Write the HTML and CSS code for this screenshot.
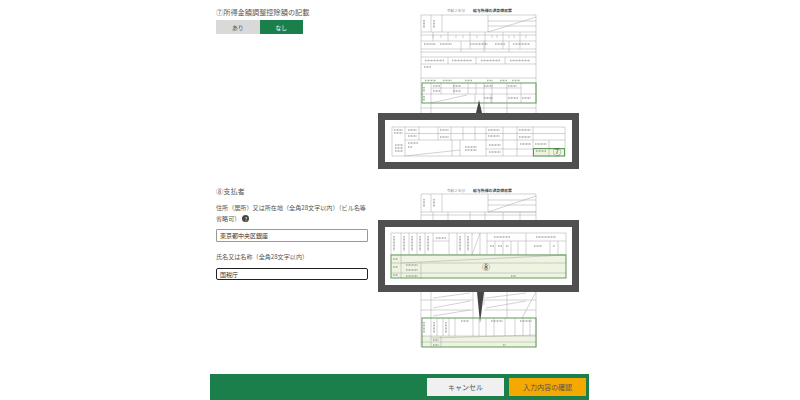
FILE: index.html
```html
<!DOCTYPE html>
<html lang="ja">
<head>
  <meta charset="UTF-8"/>
  <title>給与所得の源泉徴収票</title>
  <link rel="stylesheet" href="styles.css">
</head>
<body>
  <div class="page">

    <!-- 7: adjustment deduction -->
    <section class="section section-first">
      <div class="fields">
        <h2 class="heading">⑦所得金額調整控除額の記載</h2>
        <div class="toggle">
          <button class="toggle-btn">あり</button>
          <button class="toggle-btn active">なし</button>
        </div>
      </div>
      <svg class="figure" width="201" height="175" viewBox="378 0 201 175">
        <text class="doc-title" x="447" y="12">令和 2 年分</text>
        <text class="doc-name" x="473" y="12">給与所得の源泉徴収票</text>
        <path class="line" d="M421 15H536V113M421 15V113M431 15V32M442 15V32M488 15V32M488 21H536M488 26H536M488 32L536 17M421 32H536M421 35H536M421 41H536M421 49H536M421 52H536M421 57H536M421 64H536M421 78H536M433 32V41M448 32V41M470 32V49M485 32V49M503 32V49M520 32V49M461 41V52M484 41V52M509 41V52M448 57V64M476 57V64M505 57V64M433 35V38M441 35V38M456 35V38M463 35V38M477 35V38M492 35V38M497 35V38M509 35V38M514 35V38M526 35V38"/>
        <path class="text-mark" d="M424 20V28M434 20V28M424 44H436M440 44H452M470 44H488M495 44H505M513 44H530M425 60.500H444M452 60.500H472M481 60.500H500M510 60.500H530M424 67H431M425 80.500H436M443 80.500H452M465 80.500H472M487 80.500H493M500 80.500H507M512 80.500H520"/>
        <path class="line" d="M431 83V103M441 83V94M454 83V94M468 83V94M476 83V94M484 83V103M492 83V103M507 83V103M521 83V103M431 88H521M421 94H536M431 103L467 95M475 94V103M491 94V103"/>
        <path class="text-mark" d="M433 86H440M433 91H440M453 86H461M453 91H461M484 86H493M508 86H517M484 98H493M508 98H518M522 98H531M424 87V92M424 96V101"/>
        <rect class="hit" x="422" y="83" width="114" height="20"/>
        <path class="line" d="M421 108H536M431 103V113M484 103V113M507 103V113"/>
        <path class="dark" d="M479 100L476 113H482Z"/>

        <rect class="zoom-box" x="381.500" y="116.500" width="194" height="49"/>
        <rect class="hit-light" x="533.500" y="148.500" width="31" height="7"/>
        <path class="line" d="M392 127H565V156H392ZM405 127V156M419 127V140M405 133.500H565M405 140H565M438 127V140M451 127V140M463 127V140M475 127V140M486 127V156M503 127V156M517 127V156M533 127V156M549 140V156M460 140V156M486 149H565M405 156L460 150M452 140V156"/>
        <path class="text-mark" d="M394 130H403M394 133H403M408 130H417M408 136H417M440 130H449M440 137H449M488 130H500M488 136H500M519 130H531M519 137H531M395 145H403M395 148H403M395 151H403M408 143H418M408 147H412M465 147H477M465 150H477M489 145H501M489 152H501M520 144H531M535 144H547M536 151H546"/>
        <rect class="hit" x="533.500" y="148.500" width="31" height="7.500"/>
        <text class="mark" x="557" y="155">⑦</text>
      </svg>
    </section>

    <!-- 8: payer -->
    <section class="section section-second">
      <div class="fields">
        <h2 class="heading">⑧支払者</h2>
        <label class="label label-address">住所（居所）又は所在地（全角28文字以内）（ビル名等省略可）<span class="help">?</span></label>
        <input class="input" type="text" value="東京都中央区銀座"/>
        <label class="label label-name">氏名又は名称（全角28文字以内）</label>
        <input class="input input-focus" type="text" value="国税庁"/>
      </div>
      <svg class="figure" width="201" height="199" viewBox="378 175 201 199">
        <text class="doc-title" x="447" y="192">令和 2 年分</text>
        <text class="doc-name" x="473" y="192">給与所得の源泉徴収票</text>
        <path class="line" d="M421 194H536V220M421 194V220M431 194V212M442 194V212M488 194V212M488 200H536M488 205H536M488 212H536M488 212L536 196M421 212H536M421 215H536M433 212V220M448 212V220M470 212V220M485 212V220M503 212V220M520 212V220"/>
        <path class="text-mark" d="M424 199V207M434 199V207"/>

        <rect class="zoom-box" x="381.500" y="223.500" width="194" height="65"/>
        <path class="line" d="M391 233H566V255H391ZM401 233V255M409 233V255M417 233V255M425 233V255M433 233V255M449 233V255M457 233V255M465 233V255M472 233V255M480 233V255M487 241H566M487 233V255M495 241V255M503 241V255M511 241V255M518 241V255M526 233V255M550 241V255M558 241V255M433 241H449M472 255L480 233"/>
        <path class="text-mark" d="M394 236V251M404 236V251M412 236V251M420 236V251M428 236V251M460 236V251M468 236V251M436 238H446M494 237H510M536 237H556M490 246H494M498 246H502M506 246H509M534 246H542M553 246H555"/>
        <rect class="hit-light" x="391" y="255" width="175" height="23"/>
        <path class="line" d="M401 255V278M421 263V278M401 263L566 255M391 263H566M391 273H566"/>
        <path class="text-mark" d="M393 259H398M393 267H398M393 275H398M406 265H418M406 270H418M406 276H418M511 276H516"/>
        <rect class="hit" x="391" y="255" width="175" height="23"/>
        <text class="mark" x="486" y="270">⑧</text>

        <path class="line" d="M421 292V347M536 292V347M431 292V318M484 292V305M473 292V318M507 292V318M421 300H473M421 310H473M484 300H536M484 310H536M433 298L470 293M433 308L470 301M433 316L470 310M486 298L526 293M486 308L526 301M536 292L522 318"/>
        <path class="dark" d="M477 292H484L480 323Z"/>
        <rect class="hit-light" x="422" y="336" width="114" height="11"/>
        <path class="line" d="M431 318V336M437 318V336M443 318V336M449 318V336M455 318V336M473 318V336M479 318V336M486 318V336M494 318V336M505 318V336M515 318V336M523 318V336M530 318V336M421 336H536M431 338L536 335M421 342H536M431 336V347M441 336V347"/>
        <path class="text-mark" d="M424 322V333M434 322V333M446 322V333M461 321H469M491 321H503M520 321H532M433 340H439M433 345H439M503 345H506"/>
        <rect class="hit" x="422" y="318" width="114" height="29"/>
      </svg>
    </section>

    <footer class="footer">
      <button class="btn btn-cancel">キャンセル</button>
      <button class="btn btn-confirm">入力内容の確認</button>
    </footer>
  </div>
</body>
</html>
```

FILE: styles.css
```css
* { box-sizing: border-box; }
html, body { margin: 0; }
body {
  height: 400px;
  overflow: hidden;
  background: #fff;
  color: #555;
  font-family: "Noto Sans CJK JP", "Noto Sans", sans-serif;
  font-size: 7px;
}
.page {
  width: 379px;
  height: 400px;
  margin-left: 210px;
  display: flex;
  flex-direction: column;
}
.section {
  display: flex;
  gap: 10px;
  padding-left: 6px;
}
.section-first { height: 175px; }
.section-second { height: 199px; }
.fields { width: 152px; }
.section-first .fields { padding-top: 7px; }
.section-second .fields { padding-top: 11px; }
.figure { display: block; flex: none; }

.heading {
  margin: 0;
  font-size: 7.2px;
  font-weight: 400;
  line-height: 10px;
}
.toggle {
  display: flex;
  width: 87px;
  margin-top: 3px;
}
.toggle-btn {
  flex: 1;
  height: 14px;
  padding: 0;
  border: none;
  background: #d9d9d9;
  color: #555;
  font: inherit;
  font-size: 5.8px;
}
.toggle-btn.active {
  background: #1a7f4b;
  color: #fff;
}

.label {
  display: block;
  font-size: 6.1px;
  line-height: 11px;
}
.label-address { margin: 6px 0 5px; }
.label-name { margin: 9px 0 6px; }
.help {
  display: inline-block;
  width: 7px;
  height: 7px;
  margin-left: 2px;
  border-radius: 50%;
  background: #444;
  color: #fff;
  font-size: 5px;
  line-height: 7px;
  text-align: center;
}
.input {
  display: block;
  width: 152px;
  height: 13px;
  padding: 0 3px;
  border: 1px solid #999;
  border-radius: 1px;
  background: #fff;
  color: #333;
  font: inherit;
  font-size: 6px;
}
.input-focus {
  height: 12px;
  border-color: #222;
  border-radius: 2px;
}

/* form drawing */
.line {
  fill: none;
  stroke: #a5a5a5;
  stroke-width: 0.5;
}
.text-mark {
  fill: none;
  stroke: #777;
  stroke-width: 1.6;
  stroke-dasharray: 1 0.5;
  opacity: 0.6;
}
.dark { fill: #444; }
.hit {
  fill: none;
  stroke: #5d9a55;
  stroke-width: 1;
}
.hit-light { fill: #eef3e2; }
.zoom-box {
  fill: #fff;
  stroke: #505050;
  stroke-width: 7;
}
.doc-title {
  fill: #888;
  font-size: 3.6px;
}
.doc-name {
  fill: #444;
  font-size: 3.9px;
  font-weight: 700;
}
.mark {
  fill: #333;
  font-size: 8px;
  text-anchor: middle;
}

.footer {
  display: flex;
  justify-content: flex-end;
  align-items: center;
  gap: 5px;
  height: 26px;
  padding-right: 3px;
  background: #1a7f4b;
}
.btn {
  width: 77px;
  height: 18px;
  padding: 0;
  border: none;
  font: inherit;
  font-size: 7px;
  color: #555;
}
.btn-cancel { background: #f0f0f0; }
.btn-confirm { background: #f5a800; }
```
